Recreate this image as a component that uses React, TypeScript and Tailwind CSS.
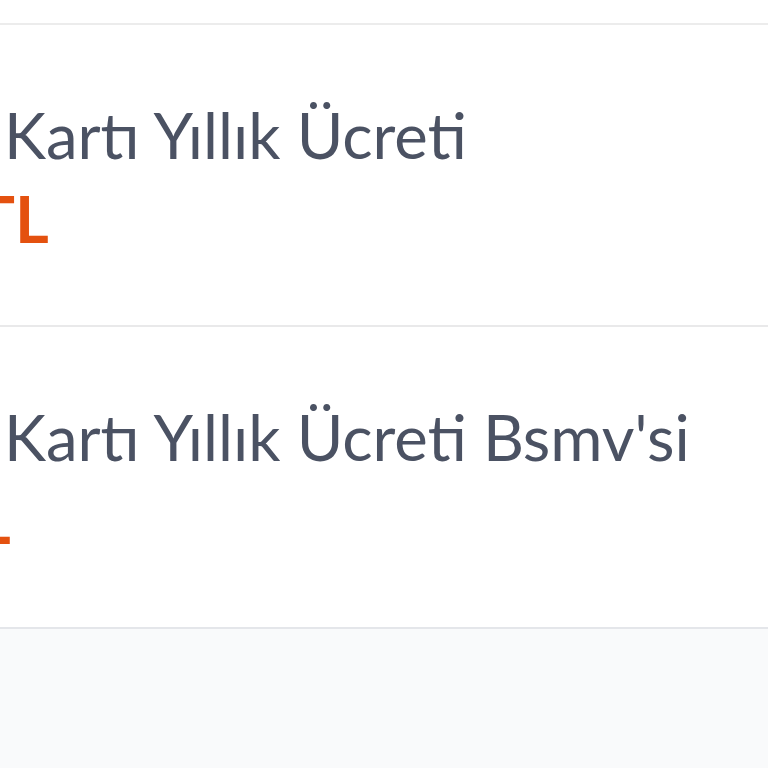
import React from "react";

const font = { fontFamily: "Lato, 'Noto Sans', sans-serif" };

export default function App() {
  return (
    <div className="min-h-screen w-[768px] overflow-hidden bg-[#f9fafb]" style={font}>
      <div className="h-[25px] bg-white border-b-2 border-[#ececec]" />
      <div className="h-[302px] bg-white border-b-2 border-[#e9e9ea] pt-[70px] overflow-hidden">
        <div className="ml-[4px] whitespace-nowrap text-[63.5px] leading-[80px] text-[#4b5263]">Kartı Yıllık Ücreti</div>
        <div className="ml-[-24px] mt-[3px] whitespace-nowrap text-[65px] leading-[80px] font-bold text-[#e4510f]">TL</div>
      </div>
      <div className="h-[302px] bg-white border-b-2 border-[#e4e6ea] pt-[70px] overflow-hidden">
        <div className="ml-[4px] whitespace-nowrap text-[63.5px] leading-[80px] text-[#4b5263]">Kartı Yıllık Ücreti Bsmv'si</div>
        <div className="ml-[-62px] mt-[2px] whitespace-nowrap text-[65px] leading-[80px] font-bold text-[#e4510f]">TL</div>
      </div>
    </div>
  );
}
